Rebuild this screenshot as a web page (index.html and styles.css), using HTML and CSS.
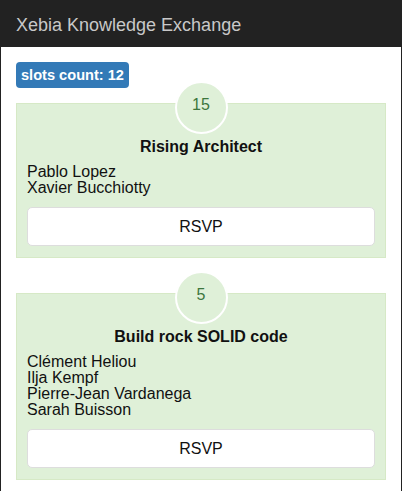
FILE: index.html
```html
<!DOCTYPE html>
<html lang="en">
<head>
<meta charset="utf-8">
<title>Xebia Knowledge Exchange</title>
<link rel="stylesheet" href="styles.css">
</head>
<body>
<div class="frame">
  <header class="navbar">
    <span class="brand">Xebia Knowledge Exchange</span>
  </header>
  <main class="content">
    <div class="count-row"><span class="badge">slots count: 12</span></div>

    <section class="slot">
      <div class="slot-circle">15</div>
      <h3 class="slot-title">Rising Architect</h3>
      <div class="speakers">
        <div>Pablo Lopez</div>
        <div>Xavier Bucchiotty</div>
      </div>
      <button class="rsvp" type="button">RSVP</button>
    </section>

    <section class="slot">
      <div class="slot-circle">5</div>
      <h3 class="slot-title">Build rock SOLID code</h3>
      <div class="speakers">
        <div>Clément Heliou</div>
        <div>Ilja Kempf</div>
        <div>Pierre-Jean Vardanega</div>
        <div>Sarah Buisson</div>
      </div>
      <button class="rsvp" type="button">RSVP</button>
    </section>
  </main>
</div>
</body>
</html>
```

FILE: styles.css
```css
* { box-sizing: border-box; }

html, body {
  margin: 0;
  padding: 0;
  background: #ffffff;
  font-family: "Liberation Sans", Arial, sans-serif;
  color: #111111;
}

.frame {
  min-height: 491px;
  border-left: 1px solid #222222;
  border-right: 1px solid #222222;
}

.navbar {
  background: #222222;
  height: 47px;
  padding: 15px 15px 12px;
}

.brand {
  display: block;
  font-size: 18px;
  line-height: 20px;
  color: #c8c8c8;
}

.content {
  padding: 15px 15px 0;
}

.count-row {
  display: flex;
  margin-bottom: 15px;
}

.badge {
  display: inline-block;
  background: #337ab7;
  color: #ffffff;
  font-weight: bold;
  font-size: 14.6px;
  height: 26px;
  line-height: 26px;
  padding: 0 5px;
  border-radius: 4px;
}

.slot {
  display: flex;
  flex-direction: column;
  background: #dff0d8;
  border: 1px solid #d6e9c6;
  padding: 0 10px 11px;
  margin: 0 0 35px;
}

.slot-circle {
  align-self: center;
  width: 53px;
  height: 53px;
  margin-top: -23px;
  border-radius: 50%;
  border: 2px solid #ffffff;
  background: #dff0d8;
  color: #3c763d;
  font-size: 16px;
  line-height: 20px;
  padding-top: 12px;
  text-align: center;
}

.slot-title {
  margin: 4px 0 8px;
  font-size: 16px;
  line-height: 18px;
  font-weight: bold;
  text-align: center;
}

.speakers {
  font-size: 16px;
  line-height: 16px;
}

.rsvp {
  margin-top: 11px;
  width: 100%;
  background: #ffffff;
  border: 1px solid #dddddd;
  border-radius: 5px;
  padding: 10px 0 9px;
  font-family: "Liberation Sans", Arial, sans-serif;
  font-size: 16px;
  line-height: 18px;
  color: #111111;
  text-align: center;
}
```
